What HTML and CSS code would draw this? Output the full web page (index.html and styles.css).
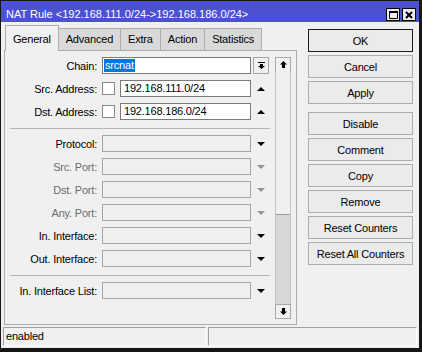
FILE: index.html
```html
<!DOCTYPE html>
<html lang="en">
  <head>
    <meta charset="utf-8" />
    <title>NAT Rule</title>
    <link rel="stylesheet" href="styles.css">
  </head>
  <body>
    <div class="window">
      <div class="titlebar">
        <span class="title">NAT Rule &lt;192.168.111.0/24-&gt;192.168.186.0/24&gt;</span>
        <div class="title-buttons">
          <span class="tbtn">
            <svg width="9" height="8" viewBox="0 0 9 8"><path d="M0.5 1.5h8v6h-8z" fill="none" stroke="#000"/><path d="M0 0h9v2H0z"/></svg>
          </span>
          <span class="tbtn">
            <svg width="8" height="8" viewBox="0 0 8 8"><path d="M1 1l6 6M7 1l-6 6" stroke="#000" stroke-width="2"/></svg>
          </span>
        </div>
      </div>

      <div class="content">
        <div class="main">
          <div class="tabs">
            <div class="tab active">General</div>
            <div class="tab">Advanced</div>
            <div class="tab">Extra</div>
            <div class="tab">Action</div>
            <div class="tab">Statistics</div>
          </div>

          <div class="panel">
            <div class="form">
              <div class="row">
                <span class="label">Chain:</span>
                <div class="input edit"><span class="selected">srcnat</span></div>
                <span class="arrow drop">
                  <svg width="7" height="7" viewBox="0 0 7 7"><path d="M0 0h7v1H0z"/><path d="M2 2h3v2h2L3.5 7 0 4h2z"/></svg>
                </span>
              </div>
              <div class="row">
                <span class="label">Src. Address:</span>
                <span class="check"></span>
                <div class="input edit short">192.168.111.0/24</div>
                <span class="arrow"><svg width="8" height="4" viewBox="0 0 8 4"><path d="M0 4h8L4 0z"/></svg></span>
              </div>
              <div class="row">
                <span class="label">Dst. Address:</span>
                <span class="check"></span>
                <div class="input edit short">192.168.186.0/24</div>
                <span class="arrow"><svg width="8" height="4" viewBox="0 0 8 4"><path d="M0 4h8L4 0z"/></svg></span>
              </div>

              <div class="sep"></div>

              <div class="row">
                <span class="label">Protocol:</span>
                <div class="input"></div>
                <span class="arrow"><svg width="8" height="4" viewBox="0 0 8 4"><path d="M0 0h8L4 4z"/></svg></span>
              </div>
              <div class="row disabled">
                <span class="label">Src. Port:</span>
                <div class="input"></div>
                <span class="arrow"><svg width="8" height="4" viewBox="0 0 8 4"><path d="M0 0h8L4 4z"/></svg></span>
              </div>
              <div class="row disabled">
                <span class="label">Dst. Port:</span>
                <div class="input"></div>
                <span class="arrow"><svg width="8" height="4" viewBox="0 0 8 4"><path d="M0 0h8L4 4z"/></svg></span>
              </div>
              <div class="row disabled">
                <span class="label">Any. Port:</span>
                <div class="input"></div>
                <span class="arrow"><svg width="8" height="4" viewBox="0 0 8 4"><path d="M0 0h8L4 4z"/></svg></span>
              </div>
              <div class="row">
                <span class="label">In. Interface:</span>
                <div class="input"></div>
                <span class="arrow"><svg width="8" height="4" viewBox="0 0 8 4"><path d="M0 0h8L4 4z"/></svg></span>
              </div>
              <div class="row">
                <span class="label">Out. Interface:</span>
                <div class="input"></div>
                <span class="arrow"><svg width="8" height="4" viewBox="0 0 8 4"><path d="M0 0h8L4 4z"/></svg></span>
              </div>

              <div class="sep"></div>

              <div class="row">
                <span class="label">In. Interface List:</span>
                <div class="input"></div>
                <span class="arrow"><svg width="8" height="4" viewBox="0 0 8 4"><path d="M0 0h8L4 4z"/></svg></span>
              </div>
            </div>

            <div class="scrollbar">
              <div class="sb-btn">
                <svg width="7" height="7" viewBox="0 0 7 7"><path d="M3.5 0L7 3.5H5V7H2V3.5H0z"/></svg>
              </div>
              <div class="sb-thumb"></div>
              <div class="sb-track"></div>
              <div class="sb-btn">
                <svg width="7" height="7" viewBox="0 0 7 7"><path d="M3.5 7L7 3.5H5V0H2v3.5H0z"/></svg>
              </div>
            </div>
          </div>
        </div>

        <div class="side">
          <button class="default">OK</button>
          <button>Cancel</button>
          <button>Apply</button>
          <button class="spaced">Disable</button>
          <button>Comment</button>
          <button>Copy</button>
          <button>Remove</button>
          <button>Reset Counters</button>
          <button>Reset All Counters</button>
        </div>
      </div>

      <div class="statusbar">
        <div class="pane first">enabled</div>
        <div class="pane"></div>
      </div>
    </div>
  </body>
</html>
```

FILE: styles.css
```css
* {
  box-sizing: border-box;
}

html, body {
  margin: 0;
  width: 100%;
  height: 100%;
}

body {
  font-family: "Liberation Sans", Arial, sans-serif;
  font-size: 11px;
  letter-spacing: -0.2px;
  color: #000000;
  background: #f0f0f0;
}

.window {
  width: 422px;
  height: 352px;
  display: flex;
  flex-direction: column;
  background: #f0f0f0;
  border-style: solid;
  border-color: #161616;
  border-width: 1px 3px 4px 1px;
}

/* title bar */

.titlebar {
  height: 21px;
  flex-shrink: 0;
  display: flex;
  background: #4b51d1;
}

.title {
  flex: 1;
  color: #ffffff;
  letter-spacing: 0;
  line-height: 13px;
  padding: 7px 0 0 5px;
  white-space: nowrap;
}

.title-buttons {
  display: flex;
  gap: 2px;
  margin: 7px 3px 0 0;
}

.tbtn {
  width: 14px;
  height: 13px;
  display: flex;
  align-items: center;
  justify-content: center;
  background: #ececec;
  border: 1px solid #000000;
}

/* main area */

.content {
  height: 303px;
  display: flex;
  padding: 3px 0 0 3px;
}

.main {
  width: 293px;
  display: flex;
  flex-direction: column;
}

.tabs {
  height: 25px;
  display: flex;
  padding-left: 1px;
}

.tab {
  height: 22px;
  margin-top: 3px;
  margin-right: -1px;
  padding: 4px 7px 0;
  line-height: 13px;
  background: #d9d9d9;
  border: 1px solid #acacac;
  border-bottom: none;
  white-space: nowrap;
}

.tab.active {
  position: relative;
  z-index: 1;
  height: 26px;
  margin-top: 0;
  padding-top: 7px;
  background: #f0f0f0;
}

.panel {
  height: 275px;
  display: flex;
  padding: 6px 5px 5px 0;
  border: 1px solid #acacac;
}

.form {
  flex: 1;
  display: flex;
  flex-direction: column;
  gap: 6px;
}

.row {
  height: 17px;
  display: flex;
  align-items: center;
}

.label {
  width: 93px;
  margin-right: 4px;
  padding-right: 1px;
  text-align: right;
  white-space: nowrap;
}

.row.disabled .label {
  color: #6d6d6d;
}

.input {
  width: 149px;
  height: 17px;
  background: #f0f0f0;
  border: 1px solid #a5a5a5;
  line-height: 15px;
  white-space: nowrap;
}

.input.edit {
  background: #ffffff;
  border-color: #7a7a7a;
  padding-left: 3px;
}

.input.short {
  width: 131px;
}

.selected {
  display: inline-block;
  margin-left: -2px;
  padding: 0 1px;
  line-height: 13px;
  color: #ffffff;
  background: #0078d7;
}

.check {
  width: 13px;
  height: 13px;
  margin-right: 5px;
  background: #ffffff;
  border: 1px solid #8a8a8a;
}

.arrow {
  width: 16px;
  height: 17px;
  margin-left: 2px;
  display: flex;
  align-items: center;
  justify-content: center;
  fill: #000000;
}

.row.disabled .arrow {
  fill: #8a998a;
}

.arrow.drop {
  border: 1px solid #a5a5a5;
  background: #f0f0f0;
}

.sep {
  height: 1px;
  margin: 2px 5px 0;
  background: #b4b4b4;
}

/* scrollbar */

.scrollbar {
  width: 16px;
  display: flex;
  flex-direction: column;
  background: #d8d8d8;
  border: 1px solid #c4c4c4;
}

.sb-btn {
  height: 15px;
  display: flex;
  align-items: center;
  justify-content: center;
  background: #f0f0f0;
  border: 1px solid #a8a8a8;
  margin: -1px;
}

.sb-thumb {
  height: 144px;
  background: #f0f0f0;
  border-bottom: 1px solid #9a9a9a;
}

.sb-track {
  flex: 1;
}

/* buttons */

.side {
  width: 105px;
  margin-left: 11px;
  padding-top: 4px;
  display: flex;
  flex-direction: column;
  gap: 3px;
}

.side button {
  height: 23px;
  padding: 0;
  font: inherit;
  letter-spacing: inherit;
  color: #000000;
  background: #ebebeb;
  border: 1px solid #adadad;
}

.side button.default {
  border-color: #1a1a1a;
}

.side button.spaced {
  margin-top: 5px;
}

/* status bar */

.statusbar {
  height: 23px;
  display: flex;
  gap: 2px;
  padding: 2px 2px 0;
}

.pane {
  flex: 1;
  height: 19px;
  padding-left: 2px;
  line-height: 17px;
  border: 1px solid;
  border-color: #a0a0a0 #ffffff #ffffff #a0a0a0;
}

.pane.first {
  flex: none;
  width: 203px;
}
```
